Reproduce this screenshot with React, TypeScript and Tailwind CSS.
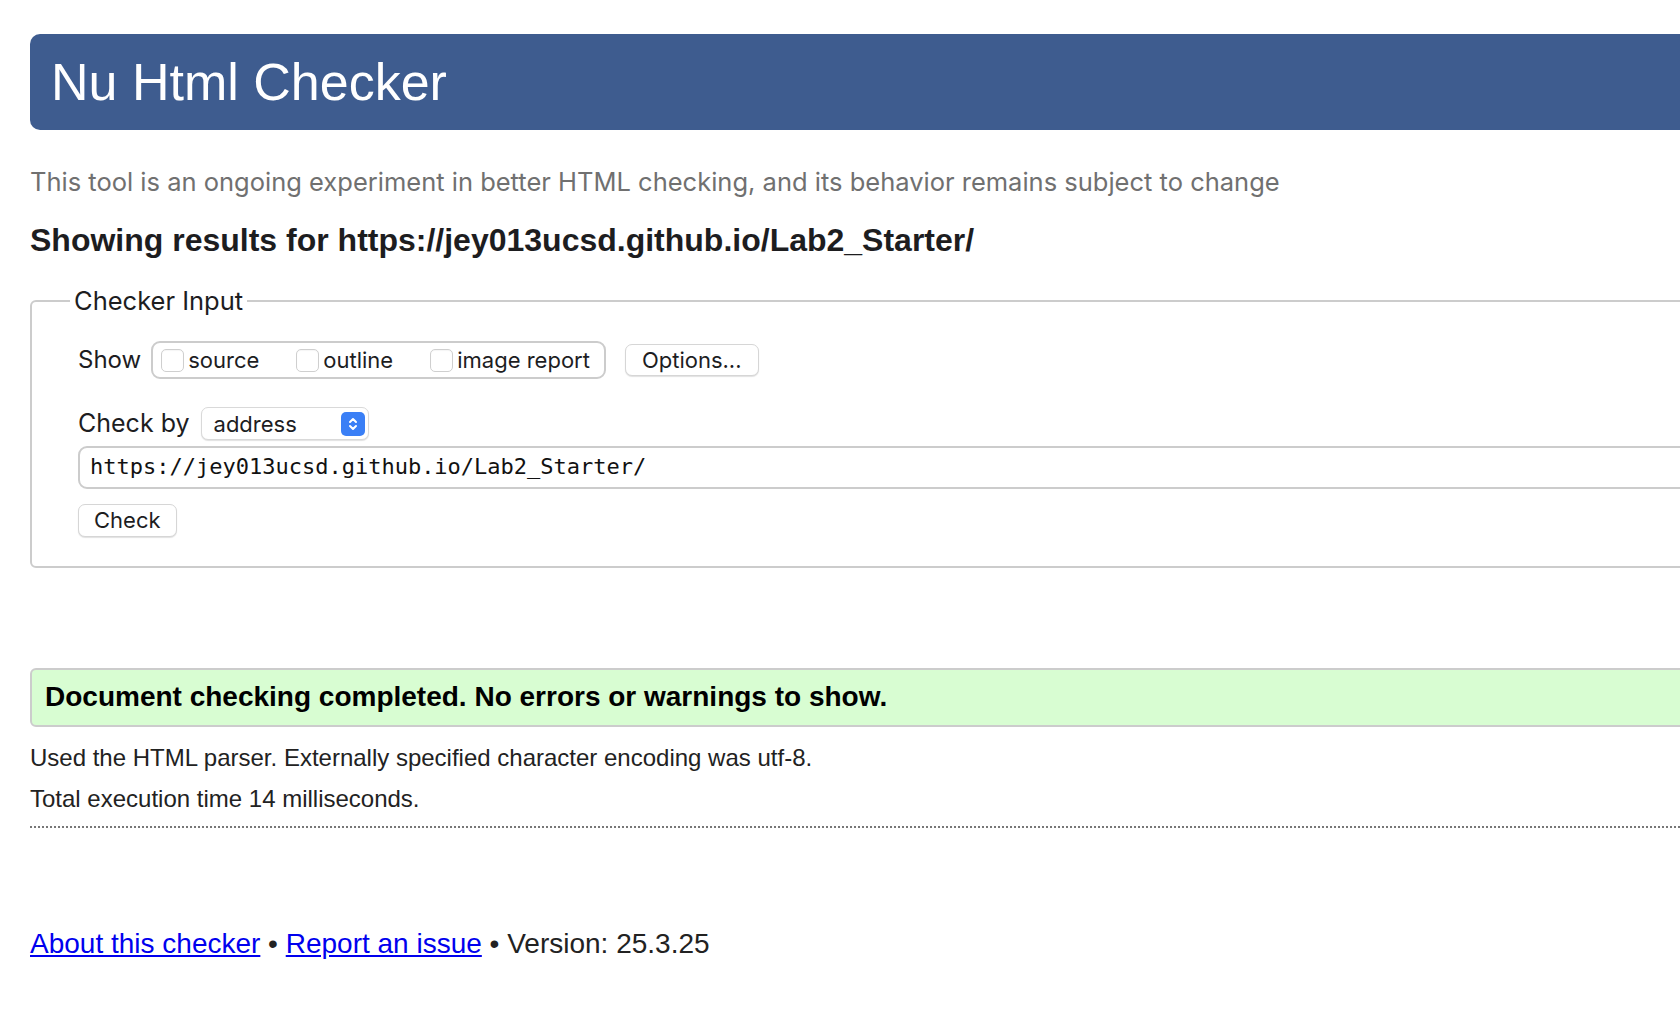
import React from 'react';

const sans = "font-['Liberation_Sans',Arial,sans-serif]";
const ui = "font-['Inter','Noto_Sans',sans-serif]";

const showOptions = ['source', 'outline', 'image report'];

function UpDownIcon() {
  return (
    <span className="flex h-[24px] w-[24px] items-center justify-center rounded-[5px] bg-[#3a7ff6]">
      <svg width="12" height="18" viewBox="0 0 12 18" fill="none" stroke="white" strokeWidth="2" strokeLinecap="round" strokeLinejoin="round">
        <path d="M3 7 L6 4 L9 7" />
        <path d="M3 11 L6 14 L9 11" />
      </svg>
    </span>
  );
}

export default function App() {
  return (
    <div className="w-full overflow-hidden bg-white">
      <div className="w-[1800px] pl-[30px] pt-[34px] pb-[40px] text-[#222]">
        {/* Header */}
        <div className="flex h-[96px] items-center rounded-l-[10px] bg-[#3e5c8f] pl-[21px]">
          <h1 className={`${sans} text-[52px] leading-none text-white`}>Nu Html Checker</h1>
        </div>

        <p className={`${ui} mt-[36px] text-[25.5px] leading-[31px] text-[#707070]`}>
          This tool is an ongoing experiment in better HTML checking, and its behavior remains subject to change
        </p>

        <h2 className={`${sans} mt-[25px] text-[32px] font-bold leading-[36px] text-[#1d1d1f]`}>
          Showing results for https://jey013ucsd.github.io/Lab2_Starter/
        </h2>

        {/* Checker input */}
        <fieldset className="mt-[28px] rounded-[6px] border-2 border-[#cccccc] pl-[38px] pt-[26px] pb-[29px]">
          <legend className={`${ui} px-[4px] text-[25.5px] leading-[29px] text-[#1d1d1f]`}>Checker Input</legend>

          <div className="ml-[8px] flex items-center">
            <span className={`${ui} text-[24px] text-[#1d1d1f]`}>Show</span>
            <div className="ml-[10px] flex h-[38px] items-center rounded-[9px] border-2 border-[#cccccc] pl-[8px] pr-[14px]">
              {showOptions.map((opt, i) => (
                <label key={opt} className={`flex items-center ${i > 0 ? 'ml-[37px]' : ''}`}>
                  <input
                    type="checkbox"
                    className="h-[23px] w-[23px] appearance-none rounded-[5px] border border-[#cfcfcf] bg-white shadow-[inset_0_1px_1px_rgba(0,0,0,0.04)]"
                  />
                  <span className={`${ui} ml-[4px] text-[22px] leading-none text-[#1d1d1f]`}>{opt}</span>
                </label>
              ))}
            </div>
            <button className={`${ui} ml-[19px] h-[32px] rounded-[7px] border border-[#d6d6d6] bg-white px-[16px] text-[22px] leading-none text-[#1d1d1f] shadow-[0_1px_1px_rgba(0,0,0,0.12)]`}>
              Options...
            </button>
          </div>

          <div className="ml-[8px] mt-[26px] flex items-center">
            <span className={`${ui} text-[25px] text-[#1d1d1f]`}>Check by</span>
            <div className="ml-[11px] flex h-[33px] w-[168px] items-center justify-between rounded-[7px] border border-[#d9d9d9] bg-white pl-[12px] pr-[3px] shadow-[0_1px_1px_rgba(0,0,0,0.12)]">
              <span className={`${ui} text-[22px] leading-none text-[#1d1d1f]`}>address</span>
              <UpDownIcon />
            </div>
          </div>

          <div className="ml-[8px] mt-[3px] flex h-[43px] items-center rounded-[9px] border-2 border-[#cccccc] pl-[10px]">
            <span className="font-['DejaVu_Sans_Mono',monospace] text-[22px] leading-none text-[#111]">
              https://jey013ucsd.github.io/Lab2_Starter/
            </span>
          </div>

          <button className={`${ui} ml-[8px] mt-[15px] h-[33px] rounded-[7px] border border-[#d6d6d6] bg-white px-[15px] text-[22px] leading-none text-[#1d1d1f] shadow-[0_1px_1px_rgba(0,0,0,0.12)]`}>
            Check
          </button>
        </fieldset>

        {/* Result */}
        <div className="mt-[100px] flex h-[59px] items-center rounded-l-[6px] border-2 border-[#cccccc] bg-[#d8fdd2] pl-[13px]">
          <p className={`${sans} text-[28px] font-bold leading-none text-black`}>
            Document checking completed. No errors or warnings to show.
          </p>
        </div>

        <p className={`${sans} mt-[17px] text-[24px] leading-[28px] text-[#222]`}>
          Used the HTML parser. Externally specified character encoding was utf-8.
        </p>
        <p className={`${sans} mt-[13px] text-[24px] leading-[28px] text-[#222]`}>
          Total execution time 14 milliseconds.
        </p>

        <div className="mt-[13px] border-t-2 border-dotted border-[#777]" />

        <p className={`${sans} mt-[99px] text-[28px] leading-[34px] text-[#222]`}>
          <a href="#" className="text-[#0000ee] underline">About this checker</a>
          {' • '}
          <a href="#" className="text-[#0000ee] underline">Report an issue</a>
          {' • Version: 25.3.25'}
        </p>
      </div>
    </div>
  );
}
